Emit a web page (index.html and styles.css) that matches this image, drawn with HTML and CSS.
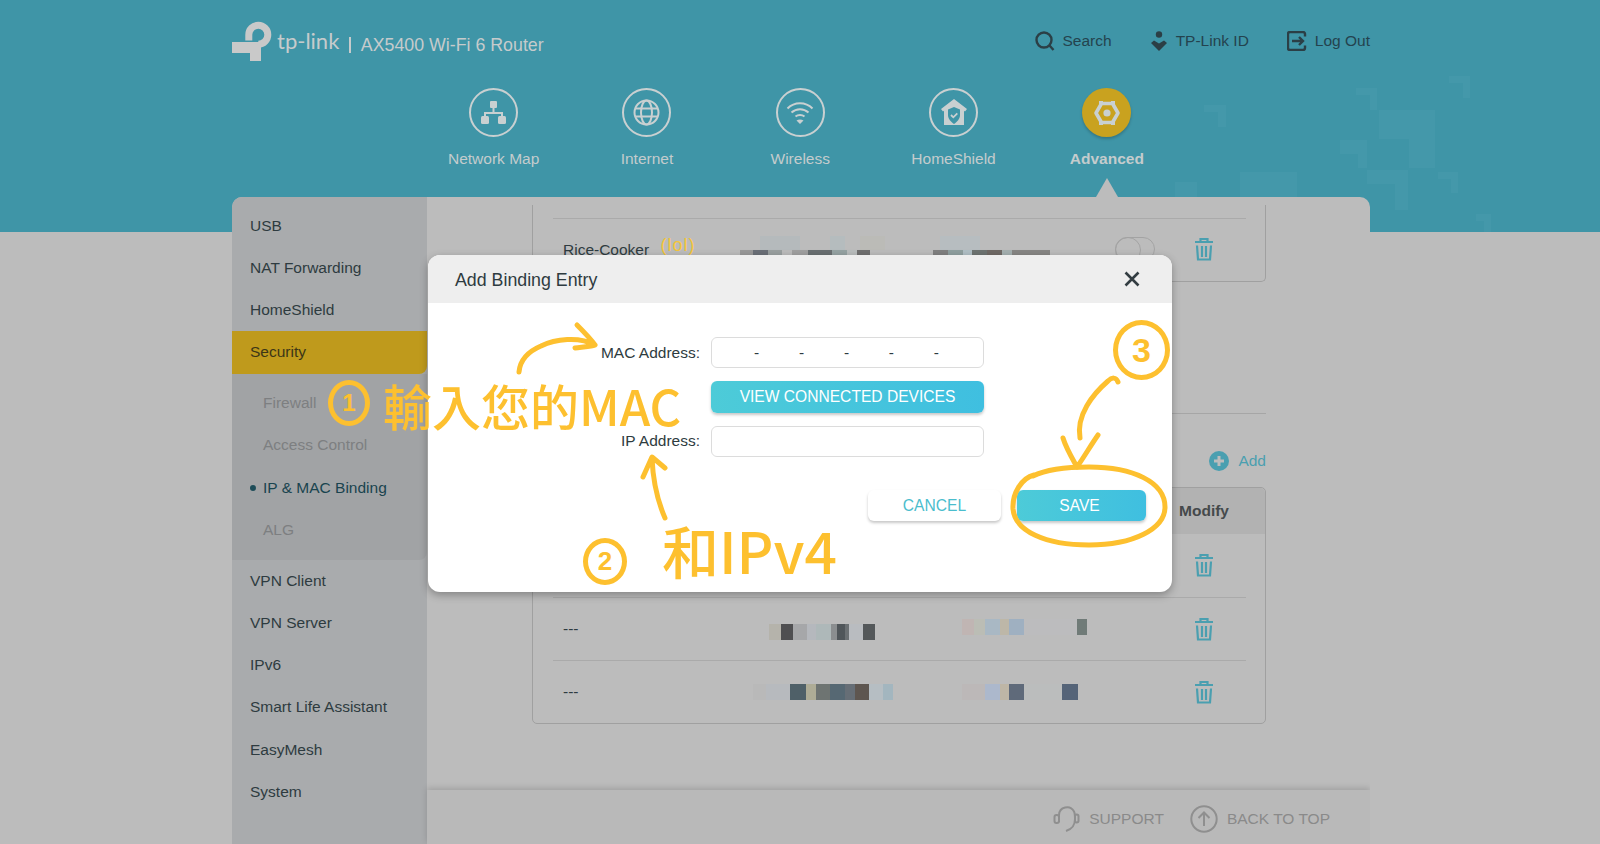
FILE: index.html
```html
<!DOCTYPE html>
<html lang="en">
<head>
  <meta charset="UTF-8" />
  <title>TP-Link AX5400 Wi-Fi 6 Router</title>
  <link rel="stylesheet" href="styles.css">
</head>

<body>
<div class="page">
  <!-- Pixel decoration in the teal band -->
  <svg class="decor" width="1600" height="232" viewBox="0 0 1600 232">
    <path d="M1449 76h21v22h-7v-15h-14z" />
    <path d="M1356 88h21v22h-7v-15h-14z" />
    <path d="M1204 105h22v22h-8v-15h-14z" />
    <path d="M1379 110h56v58h-26v-29h-30z" />
    <path d="M1340 140h27v28h-9v-14h-18z" />
    <path d="M1367 170h41v40h-13v-26h-28z" />
    <path d="M1438 172h20v21h-7v-14h-13z" />
    <path d="M1240 172h57v25h-57z" />
    <path d="M1175 182h22v15h-22z" />
    <path d="M1476 214h15v18h-7v-11h-8z" />
  </svg>

  <header class="header">
    <div class="top-row">
      <div class="brand">
        <svg class="brand-mark" width="40" height="40" viewBox="0 0 40 40">
          <path class="brand-ring" d="M16.800 19.500V13.700A9.500 9.500 0 1 1 26.300 23.200" />
          <path class="brand-fill" d="M0 21H29V40H18V32H0z" />
        </svg>
        <span class="brand-name">tp-link</span>
        <span class="brand-sep"></span>
        <span class="brand-model">AX5400 Wi-Fi 6 Router</span>
      </div>
      <div class="top-links">
        <a class="top-link">
          <svg width="20" height="20" viewBox="0 0 20 20"><circle cx="9" cy="9" r="7.500" /><path d="M14.500 14.500l4 4.500" /></svg>
          Search
        </a>
        <a class="top-link">
          <svg width="18" height="20" viewBox="0 0 18 20"><circle class="solid" cx="9" cy="3.500" r="3.200" /><path class="solid" d="M1 12l3-2.500 5 3 5-3 3 2.500-8 8z" /></svg>
          TP-Link ID
        </a>
        <a class="top-link">
          <svg width="20" height="20" viewBox="0 0 20 20"><path d="M18 5.500V3a2 2 0 0 0-2-2H3a2 2 0 0 0-2 2v14a2 2 0 0 0 2 2h13a2 2 0 0 0 2-2v-2.500" /><path d="M5 10h11M12 6l4 4-4 4" /></svg>
          Log Out
        </a>
      </div>
    </div>

    <nav class="main-nav">
      <a class="nav-item">
        <span class="nav-icon">
          <svg width="27" height="24" viewBox="0 0 27 24"><rect class="solid" x="10" y="0" width="7" height="7" rx="1" /><rect class="solid" x="1" y="15" width="8" height="8" rx="1.500" /><rect class="solid" x="18" y="15" width="8" height="8" rx="1.500" /><path d="M13.500 7v5M5 15v-3h17v3" /></svg>
        </span>
        Network Map
      </a>
      <a class="nav-item">
        <span class="nav-icon">
          <svg width="27" height="27" viewBox="0 0 27 27"><circle cx="13.500" cy="13.500" r="12" /><ellipse cx="13.500" cy="13.500" rx="5.500" ry="12" /><path d="M2 9.500h23M2 17.500h23" /></svg>
        </span>
        Internet
      </a>
      <a class="nav-item">
        <span class="nav-icon">
          <svg width="28" height="25" viewBox="0 0 28 25"><path d="M1.500 8.500c7-7 18-7 25 0M5.500 12.500c5-4.500 12-4.500 17 0M9.500 16.500c2.500-2 6.500-2 9 0" /><path class="solid" d="M14 24l-3.500-3.500c2-1.500 5-1.500 7 0z" /></svg>
        </span>
        Wireless
      </a>
      <a class="nav-item">
        <span class="nav-icon">
          <svg width="28" height="27" viewBox="0 0 28 27"><path class="solid" d="M14 0L27 10l-2 2.500-1-.7V26H4V11.800l-1 .7L1 10z" /><path class="shield" d="M14 8l6 2.500V16c0 4-3 7-6 9-3-2-6-5-6-9v-5.500z" /><path class="check" d="M11 16l2.300 2.300 4-4" /></svg>
        </span>
        HomeShield
      </a>
      <a class="nav-item nav-item-active">
        <span class="nav-icon">
          <svg width="28" height="26" viewBox="0 0 28 26"><path class="hex" d="M8.500 3.500h11L25 13l-5.500 9.500h-11L3 13z" /><path class="solid" d="M6 1h4v4H6zM18 1h4v4h-4zM6 21h4v4H6zM18 21h4v4h-4z" /><circle class="solid" cx="14" cy="13" r="3.600" /></svg>
        </span>
        Advanced
      </a>
    </nav>
  </header>

  <div class="card">
    <aside class="sidebar">
      <a class="side-item">USB</a>
      <a class="side-item">NAT Forwarding</a>
      <a class="side-item">HomeShield</a>
      <a class="side-item side-active">Security</a>
      <div class="side-sub">
        <a class="side-item sub-item">Firewall</a>
        <a class="side-item sub-item">Access Control</a>
        <a class="side-item sub-item sub-current">IP &amp; MAC Binding</a>
        <a class="side-item sub-item">ALG</a>
      </div>
      <a class="side-item">VPN Client</a>
      <a class="side-item">VPN Server</a>
      <a class="side-item">IPv6</a>
      <a class="side-item">Smart Life Assistant</a>
      <a class="side-item">EasyMesh</a>
      <a class="side-item">System</a>
    </aside>

    <main class="content">
      <div class="content-scroll">
        <section class="panel panel-top">
          <div class="row row-top">
            <div class="cell-name">Rice-Cooker <span class="note-tag">(lol)</span></div>
            <div class="mosaic mosaic-top"></div>
            <span class="toggle"></span>
            <div class="cell-mod">
              <svg class="trash" width="20" height="23" viewBox="0 0 20 23"><path d="M6.500 3.500V1h7v2.500M1 4h18M3 7.500l1 14h12l1-14M8 8v11M12 8v11" /></svg>
            </div>
          </div>
        </section>

        <div class="section-line"></div>

        <div class="add-row">
          <a class="add-link">
            <svg width="20" height="20" viewBox="0 0 20 20"><circle class="add-disc" cx="10" cy="10" r="10" /><path class="add-plus" d="M10 5v10M5 10h10" /></svg>
            Add
          </a>
        </div>

        <section class="panel panel-table">
          <div class="table-head"><span class="cell-mod">Modify</span></div>
          <div class="row">
            <div class="cell-name">---</div><div></div><div></div>
            <div class="cell-mod">
              <svg class="trash" width="20" height="23" viewBox="0 0 20 23"><path d="M6.500 3.500V1h7v2.500M1 4h18M3 7.500l1 14h12l1-14M8 8v11M12 8v11" /></svg>
            </div>
          </div>
          <div class="row">
            <div class="cell-name">---</div>
            <div class="mosaic mosaic-mac2"></div>
            <div class="mosaic mosaic-ip2"></div>
            <div class="cell-mod">
              <svg class="trash" width="20" height="23" viewBox="0 0 20 23"><path d="M6.500 3.500V1h7v2.500M1 4h18M3 7.500l1 14h12l1-14M8 8v11M12 8v11" /></svg>
            </div>
          </div>
          <div class="row">
            <div class="cell-name">---</div>
            <div class="mosaic mosaic-mac3"></div>
            <div class="mosaic mosaic-ip3"></div>
            <div class="cell-mod">
              <svg class="trash" width="20" height="23" viewBox="0 0 20 23"><path d="M6.500 3.500V1h7v2.500M1 4h18M3 7.500l1 14h12l1-14M8 8v11M12 8v11" /></svg>
            </div>
          </div>
        </section>
      </div>

      <footer class="footer">
        <a class="foot-link">
          <svg width="27" height="28" viewBox="0 0 27 28"><path d="M6 17V10a8 8 0 0 1 15 -3.500c1 2 1 4 1 7.500 0 7-3 10-9 12" /><rect x="1.500" y="10" width="4.500" height="8" rx="2" /><rect x="22" y="9.500" width="3.500" height="8" rx="1.700" /></svg>
          SUPPORT
        </a>
        <a class="foot-link">
          <svg width="28" height="28" viewBox="0 0 28 28"><circle cx="14" cy="14" r="12.700" /><path d="M14 21V8M8.500 13L14 7.500l5.500 5.500" /></svg>
          BACK TO TOP
        </a>
      </footer>
    </main>
  </div>

  <!-- Add Binding Entry dialog -->
  <div class="modal">
    <div class="modal-head">
      <span class="modal-title">Add Binding Entry</span>
      <svg class="modal-close" width="16" height="16" viewBox="0 0 16 16"><path d="M1.500 1.500l13 13M14.500 1.500l-13 13" /></svg>
    </div>
    <div class="modal-body">
      <form class="modal-form">
        <label class="field-label">MAC Address:</label>
        <div class="field mac-field"><span>-</span><span>-</span><span>-</span><span>-</span><span>-</span></div>
        <span></span>
        <button type="button" class="btn btn-primary">VIEW CONNECTED DEVICES</button>
        <label class="field-label">IP Address:</label>
        <div class="field"></div>
      </form>
      <div class="modal-actions">
        <button type="button" class="btn btn-plain">CANCEL</button>
        <button type="button" class="btn btn-primary btn-save">SAVE</button>
      </div>
    </div>
  </div>

  <!-- Hand-drawn marks on top of the screenshot -->
  <svg class="marks" width="1600" height="844" viewBox="0 0 1600 844">
    <path d="M519 372c1-12 8-20 22-26 14-7 38-10 54-1M577 325c6 6 13 13 18 20-7 2-13 2-20 3" />
    <path d="M665 518c-7-16-12-36-13-60M643 477l9-20 13 11" />
    <path d="M1118 382c-2-5-6-5-10-1-15 13-32 34-28 57M1063 438c3 10 9 20 14 29 7-10 14-22 21-32" />
    <path d="M1034 475c-12 3-22 18-21 34 2 22 32 36 76 36 44 0 76-16 76-38 0-25-32-40-76-40-22 0-42 2-56 9" />
  </svg>
  <span class="note note-num note-one">1</span>
  <span class="note note-mac">輸入您的MAC</span>
  <span class="note note-num note-two">2</span>
  <span class="note note-ip">和IPv4</span>
  <span class="note note-num note-three">3</span>
</div>
</body>
</html>
```

FILE: styles.css
```css
* {
  box-sizing: border-box;
}

body {
  margin: 0;
  font-family: "Liberation Sans", Arial, sans-serif;
  font-size: 15.5px;
  color: #2e3b40;
}

.page {
  position: relative;
  width: 1600px;
  height: 844px;
  overflow: hidden;
  background: linear-gradient(#3f95a7 232px, #bcbcbc 232px);
}

.decor {
  position: absolute;
  left: 0;
  top: 0;
}

.decor path {
  fill: #4498aa;
}

/* Header */
.header {
  position: relative;
  width: 1138px;
  height: 197px;
  margin-left: 232px;
  padding-top: 18px;
}

.top-row {
  display: flex;
  justify-content: space-between;
  height: 70px;
}

.brand {
  display: flex;
  align-items: center;
  height: 46px;
  color: #c6cbcc;
}

.brand-ring {
  fill: none;
  stroke: #c9c9c9;
  stroke-width: 7;
}

.brand-fill {
  fill: #c9c9c9;
}

.brand-name {
  margin-left: 5px;
  margin-top: -2px;
  font-family: Lato, sans-serif;
  font-size: 22px;
}

.brand-sep {
  width: 1.500px;
  height: 16px;
  margin: 7px 10px 0;
  background: #c6cbcc;
}

.brand-model {
  margin-top: 9px;
  font-size: 17.800px;
}

.top-links {
  display: flex;
  align-items: flex-start;
  gap: 38px;
  padding-top: 13px;
}

.top-link {
  display: flex;
  align-items: center;
  gap: 8px;
  height: 20px;
  color: #24434e;
}

.top-link svg {
  fill: none;
  stroke: #2b3f46;
  stroke-width: 2.400;
}

.top-link .solid {
  fill: #2b3f46;
  stroke: none;
}

.main-nav {
  display: flex;
  margin-left: 185px;
}

.nav-item {
  display: flex;
  flex-direction: column;
  align-items: center;
  gap: 13px;
  width: 153.300px;
  line-height: 18px;
  color: #c4cccd;
}

.nav-icon {
  display: flex;
  align-items: center;
  justify-content: center;
  width: 49px;
  height: 49px;
  border: 2px solid #c9d0d1;
  border-radius: 50%;
}

.nav-icon svg {
  fill: none;
  stroke: #c9d0d1;
  stroke-width: 2;
}

.nav-icon .solid {
  fill: #c9d0d1;
  stroke: none;
}

.nav-icon .shield {
  fill: #3f95a7;
  stroke: none;
}

.nav-icon .check {
  stroke: #c9d0d1;
  stroke-width: 1.800;
}

.nav-item-active {
  position: relative;
  font-weight: bold;
}

.nav-item-active .nav-icon {
  border: none;
  background: #c9a21f;
  box-shadow: 0 2px 3px rgba(0, 0, 0, 0.2);
}

.nav-item-active .hex {
  stroke-width: 3.600;
  stroke-linejoin: round;
}

.nav-item-active::after {
  content: "";
  position: absolute;
  bottom: -29px;
  left: 50%;
  margin-left: -11px;
  border-left: 11px solid transparent;
  border-right: 11px solid transparent;
  border-bottom: 19px solid #bcbcbc;
}

/* Card */
.card {
  position: relative;
  display: flex;
  width: 1138px;
  height: 647px;
  margin-left: 232px;
  overflow: hidden;
  background: #bcbcbc;
  border-radius: 10px 10px 0 0;
}

.sidebar {
  width: 195px;
  padding-top: 7.500px;
  background: #a9abad;
  flex-shrink: 0;
}

.side-item {
  display: flex;
  align-items: center;
  height: 42.250px;
  padding-left: 18px;
}

.side-active {
  background: #bf9a1c;
  border-radius: 0 0 8px 0;
  color: #3c3617;
}

.side-sub {
  padding: 8.500px 0 8.500px;
  background: #a1a3a5;
  border-radius: 0 0 8px 0;
}

.sub-item {
  position: relative;
  padding-left: 31px;
  color: #7d7f81;
}

.sub-current {
  color: #19444f;
}

.sub-current::before {
  content: "";
  position: absolute;
  left: 18px;
  top: 18px;
  width: 6px;
  height: 6px;
  border-radius: 50%;
  background: #1d4c58;
}

.content {
  flex: 1;
  display: flex;
  flex-direction: column;
}

.content-scroll {
  flex: 1;
  padding: 8px 104px 0 105px;
}

.panel {
  border: 1px solid #a0a0a0;
  border-radius: 0 0 5px 5px;
}

.panel-top {
  height: 77px;
  padding: 13px 19px 0 20px;
  border-top: none;
}

.panel-table {
  height: 237px;
  border-radius: 5px;
}

.row {
  display: grid;
  grid-template-columns: 200px 209px 200px 84px;
  align-items: center;
  height: 63px;
  margin: 0 19px 0 20px;
  border-top: 1px solid #aaaaaa;
}

.row-top {
  grid-template-columns: 187px 375px 47px 84px;
  margin: 0;
  padding-bottom: 2px;
}

.table-head + .row {
  border-top: none;
}

.cell-name {
  padding-left: 10px;
  white-space: nowrap;
}

.note-tag {
  position: relative;
  top: -4px;
  margin-left: 7px;
  color: #f5c63a;
  font-size: 18px;
  letter-spacing: 1px;
}

.cell-mod {
  display: flex;
  justify-content: center;
}

.trash {
  fill: none;
  stroke: #4a9fb0;
  stroke-width: 2.200;
}

.toggle {
  width: 40px;
  height: 24px;
  border: 1.500px solid #a3a3a3;
  border-radius: 12px;
  position: relative;
}

.toggle::before {
  content: "";
  position: absolute;
  left: -1.500px;
  top: -1.500px;
  width: 24px;
  height: 24px;
  border: 1.500px solid #a3a3a3;
  border-radius: 50%;
}

.table-head {
  display: flex;
  align-items: center;
  justify-content: flex-end;
  height: 46px;
  padding-right: 19px;
  background: #b2b2b2;
  border-radius: 5px 5px 0 0;
  color: #45494b;
  font-weight: bold;
}

.table-head .cell-mod {
  width: 84px;
}

.section-line {
  height: 1px;
  margin-top: 131px;
  background: #a6a6a6;
}

.add-row {
  display: flex;
  justify-content: flex-end;
  margin: 36px 0 15px;
  height: 22px;
}

.add-link {
  display: flex;
  align-items: center;
  gap: 9px;
  color: #4a9fb0;
}

.add-disc {
  fill: #4a9fb0;
}

.add-plus {
  fill: none;
  stroke: #bcbcbc;
  stroke-width: 3;
}

/* Blurred MAC and IP values */
.mosaic {
  height: 16px;
  filter: blur(0.6px);
}

.mosaic-top {
  width: 310px;
  height: 24px;
  margin-top: -3px;
  background:
    linear-gradient(90deg, #bcbcbc 0 20px, #b5babc 20px 60px, #bcbcbc 60px 90px, #b5bcbe 90px 105px, #bcbcbc 105px 120px, #bbbbb7 120px 145px, #bcbcbc 145px 200px, #b7bdc0 200px 240px, #bcbcbc 240px) 0 0 / 100% 14px no-repeat,
    linear-gradient(90deg, #999 0 13px, #6b7078 13px 28px, #9aa0a0 28px 42px, #bcbcbc 42px 52px, #a0a0a0 52px 68px, #6a7072 68px 92px, #96a3a3 92px 107px, #b9bdbd 107px 117px, #707070 117px 130px, #bcbcbc 130px 193px, #808080 193px 208px, #8f9f9f 208px 223px, #b0bfc5 223px 232px, #6e7472 232px 247px, #706a66 247px 262px, #a5b0b0 262px 272px, #878684 272px) 0 14px / 100% 10px no-repeat;
}

.mosaic-mac2 {
  width: 106px;
  margin: 6px 0 0 16px;
  background: linear-gradient(90deg, #b5b3ab 0 12px, #4f4f51 12px 24px, #a6a7a9 24px 38px, #b5b8bd 38px 47px, #aeb8b9 47px 62px, #8b8e90 62px 68px, #50565a 68px 76px, #6b7073 76px 80px, #b9bcc0 80px 94px, #54585a 94px);
}

.mosaic-ip2 {
  width: 125px;
  margin-top: -4px;
  background: linear-gradient(90deg, #c0b5b3 0 12px, #bbbdb5 12px 23px, #a9b8c4 23px 38px, #bdb7a8 38px 47px, #9fb0c1 47px 62px, #bcbcbe 62px 115px, #707b78 115px);
}

.mosaic-mac3 {
  width: 140px;
  background: linear-gradient(90deg, #b9b9b9 0 13px, #b7babe 13px 37px, #4f6068 37px 53px, #aeac96 53px 63px, #6e7472 63px 77px, #566873 77px 92px, #666e76 92px 102px, #5e5650 102px 116px, #b6bec3 116px 130px, #a3b6bf 130px);
}

.mosaic-ip3 {
  width: 125px;
  background: linear-gradient(90deg, #bcb8b8 0 23px, #acb8cc 23px 38px, #beb6a6 38px 47px, #5f6a7a 47px 62px, #bbbdbd 62px 100px, #556478 100px 116px, #bcbcbc 116px);
}

.footer {
  position: relative;
  display: flex;
  justify-content: flex-end;
  align-items: center;
  gap: 26px;
  height: 54px;
  padding: 4px 40px 0 0;
  background: #b9b9b9;
  box-shadow: 0 -2px 6px rgba(0, 0, 0, 0.15);
  color: #8a8a8a;
}

.foot-link {
  display: flex;
  align-items: center;
  gap: 9px;
}

.foot-link svg {
  fill: none;
  stroke: #8f8f8f;
  stroke-width: 2;
}

/* Dialog */
.modal {
  position: absolute;
  left: 428px;
  top: 255px;
  width: 744px;
  height: 337px;
  background: #fff;
  border-radius: 12px;
  box-shadow: 0 3px 8px rgba(0, 0, 0, 0.3);
  overflow: hidden;
}

.modal-head {
  display: flex;
  align-items: center;
  justify-content: space-between;
  height: 48px;
  padding: 0 32px 0 27px;
  background: #eeeeee;
}

.modal-title {
  padding-top: 2px;
  font-size: 17.800px;
  color: #2e3b40;
}

.modal-close {
  fill: none;
  stroke: #333d42;
  stroke-width: 2.600;
  margin-top: -1px;
}

.modal-body {
  padding-top: 34px;
}

.modal-form {
  display: grid;
  grid-template-columns: 272px 273px;
  column-gap: 11px;
  row-gap: 13px;
  align-items: center;
}

.field-label {
  text-align: right;
  color: #2e3b40;
}

.field {
  height: 31px;
  border: 1.500px solid #dcdcdc;
  border-radius: 6px;
  background: #fff;
}

.mac-field {
  display: flex;
  justify-content: space-between;
  align-items: center;
  padding: 0 44px 0 42px;
}

.btn {
  height: 31.500px;
  padding: 0;
  border: none;
  border-radius: 6px;
  font-family: inherit;
  font-size: 15.600px;
  box-shadow: 0 2px 3px rgba(0, 0, 0, 0.22);
}

.btn-primary {
  background: linear-gradient(90deg, #4dcbd8, #3fbfe0);
  color: #fff;
}

.btn-plain {
  background: #fff;
  color: #4abdcd;
}

.modal-actions .btn {
  padding-top: 2px;
}

.modal-actions .btn-save {
  padding-right: 4px;
}

.modal-actions {
  display: grid;
  grid-template-columns: 133px 129px;
  justify-content: end;
  column-gap: 16px;
  margin-top: 33px;
  padding-right: 26px;
}

/* Hand-drawn marks */
.marks {
  position: absolute;
  left: 0;
  top: 0;
  fill: none;
  stroke: #fdc02f;
  stroke-width: 5;
  stroke-linecap: round;
  stroke-linejoin: round;
}

.note {
  position: absolute;
  color: #fdc02f;
  font-family: "Noto Sans CJK TC", "Liberation Sans", sans-serif;
  font-weight: 500;
  white-space: nowrap;
}

.note-num {
  display: flex;
  align-items: center;
  justify-content: center;
  border: 5px solid #fdc02f;
  border-radius: 50%;
  font-family: "Liberation Sans", sans-serif;
  font-weight: 700;
}

.note-one {
  left: 328px;
  top: 380px;
  width: 42px;
  height: 46px;
  font-size: 24px;
}

.note-two {
  left: 583px;
  top: 538px;
  width: 44px;
  height: 47px;
  font-size: 26px;
}

.note-three {
  left: 1113px;
  top: 320px;
  width: 57px;
  height: 60px;
  font-size: 34px;
}

.note-mac {
  left: 383px;
  top: 380px;
  font-size: 49px;
  line-height: 50px;
}

.note-ip {
  left: 662px;
  top: 518px;
  font-size: 57px;
  line-height: 62px;
}
```
